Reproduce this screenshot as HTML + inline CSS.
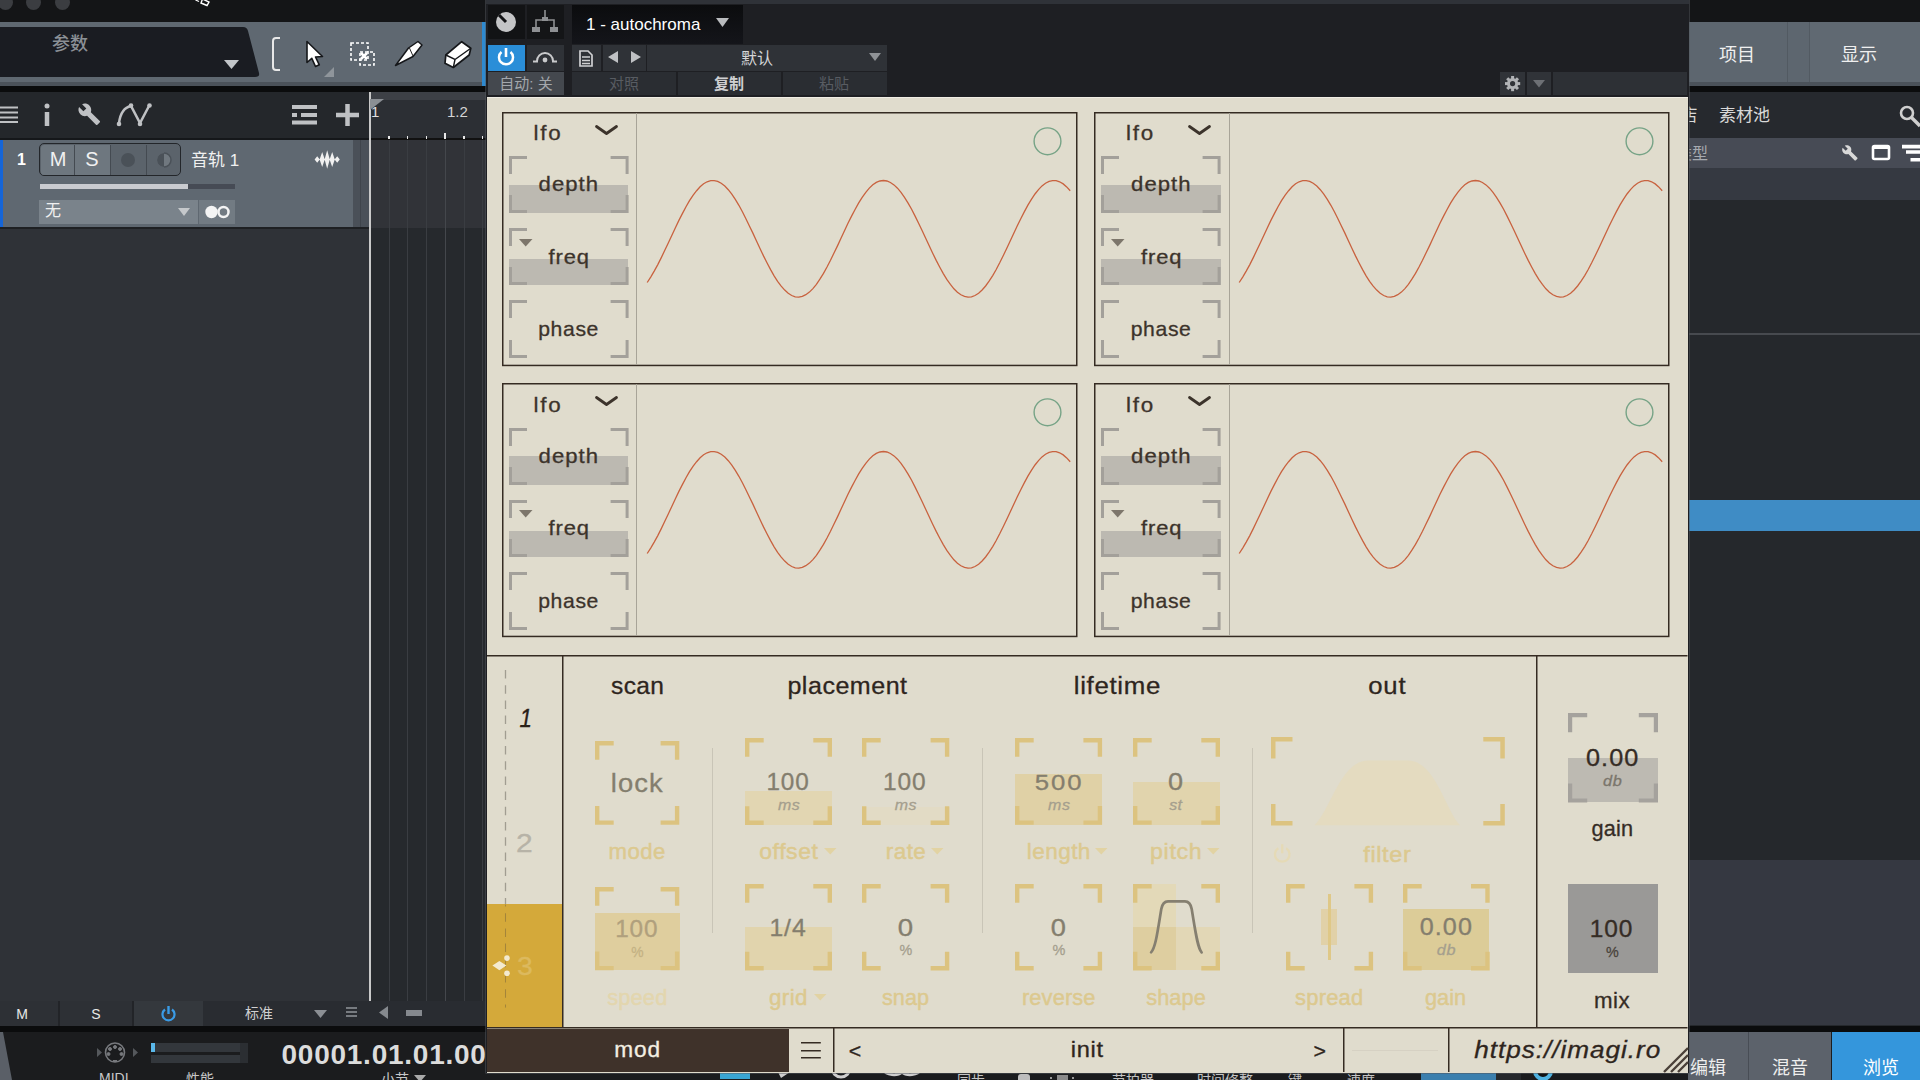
<!DOCTYPE html><html lang="zh"><head><meta charset="utf-8"><title>autochroma</title><style>
*{margin:0;padding:0;box-sizing:border-box}
html,body{width:1920px;height:1080px;overflow:hidden;background:#25282c}
body{position:relative;font-family:"Liberation Sans","Noto Sans CJK SC",sans-serif;color:#ccc}
.a{position:absolute}
.t{position:absolute;white-space:nowrap;line-height:1}
.c{text-align:center}
svg{position:absolute;overflow:visible}
.pl{font-family:"Liberation Sans",sans-serif}
</style></head><body>
<!--DAW-->
<div class="a" style="left:0px;top:0px;width:1920px;height:22px;background:#141517;"></div>
<div class="a" style="left:-2px;top:-5px;width:15px;height:15px;background:#3b3d41;border-radius:50%"></div>
<div class="a" style="left:26px;top:-5px;width:15px;height:15px;background:#3b3d41;border-radius:50%"></div>
<div class="a" style="left:55px;top:-5px;width:15px;height:15px;background:#3b3d41;border-radius:50%"></div>
<svg style="left:194px;top:0" width="18" height="7"><path d="M8.5 -1 L15 2 L13 5.500 L7 3 Z" fill="#141517" stroke="#fff" stroke-width="1.400"/><path d="M1.500 0 L5 1.500" stroke="#fff" stroke-width="1.200"/></svg>
<div class="a" style="left:0px;top:22px;width:487px;height:60px;background:#5f6871;"></div>
<div class="a" style="left:0px;top:82px;width:487px;height:4px;background:#4b525a;"></div>
<div class="a" style="left:0px;top:86px;width:1920px;height:6px;background:#0b0c0d;"></div>
<svg style="left:0;top:0" width="300" height="90"><path d="M0 27 H243 Q247 27 248 31 L259 73 Q260 77 255 77 H0Z" fill="#1a1c22"/></svg>
<div class="t" style="left:52px;top:35px;font-size:18px;color:#8b9096;font-weight:500">参数</div>
<svg style="left:224px;top:60px" width="16" height="10"><path d="M0 0H15L7.5 9Z" fill="#c3c6ca"/></svg>
<svg style="left:0;top:0" width="490" height="90" fill="none" stroke="#fff" stroke-width="2">
<path d="M280 38 H276 Q273 38 273 41 V67 Q273 70 276 70 H280" stroke="#e8e8e8"/>
<path d="M307 41.500 L307 62.500 L311.800 58.300 L315.500 66.500 L319.300 64.800 L315.500 57 L322.500 56.500 Z" fill="#fff" stroke="#15171a" stroke-width="1.600" stroke-linejoin="round"/>
<path d="M324 77 L334 67 V77Z" fill="#8f959b" stroke="none"/>
<rect x="351" y="43" width="17" height="17" stroke-dasharray="3 2" stroke="#fff" stroke-width="1.6"/>
<rect x="360" y="52" width="14" height="13" stroke-dasharray="3 2" stroke="#fff" stroke-width="1.6"/>
<path d="M361 53 L367 59 M367 53 L361 59" stroke="#fff" stroke-width="2.500"/>
<path d="M395.500 65.500 L408.500 48 L418 41.500 L422 45 L413 56.500 Z" fill="#fff" stroke="#15171a" stroke-width="1.500" stroke-linejoin="round"/>
<path d="M409 47 L413 56" stroke="#222" stroke-width="1"/>
<path d="M445.800 55 L461.700 41.700 L470.800 48.300 L469.200 55 L453.300 67.500 L445 63.300 Z" fill="#fff" stroke="#15171a" stroke-width="1.700" stroke-linejoin="round"/>
<path d="M445.800 55 L455 59.500 L470.800 48.300 M455 59.500 L453.300 67.500" stroke="#15171a" stroke-width="1.400"/>
</svg>
<div class="a" style="left:482px;top:22px;width:5px;height:64px;background:#2e8ad0;"></div>
<div class="a" style="left:0px;top:92px;width:369px;height:47px;background:#24272b;"></div>
<div class="a" style="left:0px;top:138px;width:369px;height:2px;background:#15171a;"></div>
<svg style="left:0;top:0" width="370" height="140" fill="none" stroke="#bfc1c4">
<path d="M0 107.500H18 M0 112.500H18 M0 117.500H18 M0 122H18" stroke-width="2.200"/>
<path d="M47 112 V126" stroke-width="4.500"/><circle cx="47" cy="106" r="2.500" fill="#bfc1c4" stroke="none"/>
<path transform="translate(77.5 102.5) scale(0.98)" d="M22.7 19l-9.1-9.1c.9-2.3.4-5-1.5-6.9-2-2-5-2.4-7.4-1.3L9 6 6 9 1.6 4.7C.4 7.1.9 10.1 2.9 12.1c1.9 1.9 4.6 2.4 6.9 1.5l9.1 9.1c.4.4 1 .4 1.4 0l2.3-2.3c.5-.4.5-1.1.1-1.4z" fill="#bfc1c4" stroke="none"/>
<path d="M119 123 Q121 108 131 106 L140 123 L149 106" stroke-width="2.500"/>
<circle cx="119" cy="124" r="2.300" fill="#bfc1c4" stroke="none"/><circle cx="131" cy="105.500" r="2.300" fill="#bfc1c4" stroke="none"/><circle cx="140" cy="124" r="2.300" fill="#bfc1c4" stroke="none"/><circle cx="149.500" cy="105.500" r="2.300" fill="#bfc1c4" stroke="none"/>
<path d="M292 107H317 M301 115H317 M292 122.500H317" stroke-width="4"/><path d="M292 115H297" stroke-width="4"/>
<path d="M336 115H359 M347.500 104V126" stroke-width="4.500"/>
</svg>
<div class="a" style="left:0px;top:140px;width:353px;height:88px;background:#5f6871;"></div>
<div class="a" style="left:0px;top:140px;width:3px;height:88px;background:#1565d8;"></div>
<div class="a" style="left:353px;top:140px;width:16px;height:88px;background:#4a5058;"></div>
<div class="a" style="left:360px;top:140px;width:1px;height:88px;background:#3f444b;"></div>
<div class="a" style="left:0px;top:228px;width:369px;height:773px;background:#2f3237;"></div>
<div class="a" style="left:0px;top:227px;width:369px;height:2px;background:#1e2023;"></div>
<div class="t" style="left:17px;top:152px;font-size:16px;color:#fff;font-weight:bold">1</div>
<div class="a" style="left:39px;top:143px;width:142px;height:33px;background:#5b636b;border-radius:5px;border:1.500px solid #23262a"></div>
<div class="a" style="left:41px;top:145px;width:69px;height:30px;background:#6e777f;border-radius:3px 0 0 3px"></div>
<div class="a" style="left:74px;top:145px;width:1px;height:30px;background:#444a51;"></div>
<div class="a" style="left:110px;top:145px;width:1px;height:30px;background:#444a51;"></div>
<div class="a" style="left:146px;top:145px;width:1px;height:30px;background:#444a51;"></div>
<div class="t c" style="left:38.0px;top:149px;width:40px;font-size:20px;color:#f1f1f1;">M</div>
<div class="t c" style="left:72.0px;top:149px;width:40px;font-size:20px;color:#f1f1f1;">S</div>
<div class="a" style="left:121px;top:153px;width:14px;height:14px;background:#4a5158;border-radius:50%"></div>
<svg style="left:156px;top:152px" width="16" height="16"><circle cx="8" cy="8" r="7" fill="#70787f"/><path d="M8 1 A7 7 0 0 0 8 15Z" fill="#4a5158"/><path d="M8 1 A7 7 0 0 1 8 15" fill="none" stroke="#4a5158" stroke-width="1.500"/></svg>
<div class="t" style="left:191px;top:152px;font-size:17px;color:#f0f0f0;">音轨 1</div>
<svg style="left:314.500px;top:149.700px" width="26" height="20"><path d="M-0.4 9.5L2.2 6.3L4.8 9.5L2.2 12.7ZM4.6 9.5L7.2 2.0L9.8 9.5L7.2 17.0ZM9.6 9.5L12.2 0.1999999999999993L14.8 9.5L12.2 18.8ZM14.6 9.5L17.2 2.0L19.8 9.5L17.2 17.0ZM19.6 9.5L22.2 6.3L24.8 9.5L22.2 12.7Z" fill="#f0f0f0"/></svg>
<div class="a" style="left:40px;top:184px;width:195px;height:5px;background:#464b55;"></div>
<div class="a" style="left:40px;top:184px;width:148px;height:5px;background:#c9cbd0;"></div>
<div class="a" style="left:39px;top:200px;width:159px;height:24px;background:#7a838b;"></div>
<div class="a" style="left:199px;top:200px;width:36px;height:24px;background:#727b83;"></div>
<div class="t" style="left:45px;top:203px;font-size:16px;color:#f0f0f0;">无</div>
<svg style="left:178px;top:208px" width="12" height="8"><path d="M0 0H12L6 8Z" fill="#c5c8cb"/></svg>
<svg style="left:204px;top:204px" width="28" height="16"><circle cx="7.500" cy="8" r="6.200" fill="#f4f4f4"/><circle cx="19.500" cy="8" r="5" fill="none" stroke="#f4f4f4" stroke-width="2.500"/></svg>
<div class="a" style="left:369px;top:92px;width:118px;height:8px;background:#3d4046;"></div>
<div class="a" style="left:369px;top:100px;width:118px;height:40px;background:#2c2f34;"></div>
<div class="a" style="left:369px;top:140px;width:118px;height:88px;background:#313338;"></div>
<div class="a" style="left:369px;top:228px;width:118px;height:773px;background:#26292d;"></div>
<div class="a" style="left:369px;top:138px;width:118px;height:1.5px;background:#111;"></div>
<div class="a" style="left:388.5px;top:140px;width:1px;height:861px;background:#3a3d42;"></div>
<div class="a" style="left:388.25px;top:136px;width:1.5px;height:3px;background:#e8e8e8;"></div>
<div class="a" style="left:407.0px;top:140px;width:1px;height:861px;background:#3a3d42;"></div>
<div class="a" style="left:406.75px;top:136px;width:1.5px;height:3px;background:#e8e8e8;"></div>
<div class="a" style="left:426.0px;top:140px;width:1px;height:861px;background:#3a3d42;"></div>
<div class="a" style="left:425.75px;top:136px;width:1.5px;height:3px;background:#e8e8e8;"></div>
<div class="a" style="left:444.5px;top:140px;width:1px;height:861px;background:#44474c;"></div>
<div class="a" style="left:444.25px;top:133px;width:1.5px;height:6px;background:#e8e8e8;"></div>
<div class="a" style="left:463.5px;top:140px;width:1px;height:861px;background:#3a3d42;"></div>
<div class="a" style="left:463.25px;top:136px;width:1.5px;height:3px;background:#e8e8e8;"></div>
<div class="a" style="left:482.0px;top:140px;width:1px;height:861px;background:#3a3d42;"></div>
<div class="a" style="left:481.75px;top:136px;width:1.5px;height:3px;background:#e8e8e8;"></div>
<div class="a" style="left:369px;top:92px;width:1.5px;height:909px;background:#c9c9c9;"></div>
<svg style="left:370px;top:99px" width="16" height="12"><path d="M0 0H14L0 11Z" fill="#8b8f94"/></svg>
<div class="t" style="left:371px;top:104px;font-size:15px;color:#e0e0e0;">1</div>
<div class="t" style="left:447px;top:104px;font-size:15px;color:#d5d5d5;">1.2</div>
<div class="a" style="left:0px;top:1001px;width:487px;height:25px;background:#292c31;"></div>
<div class="a" style="left:0px;top:1001px;width:58px;height:25px;background:#2d3035;"></div>
<div class="a" style="left:60px;top:1001px;width:72px;height:25px;background:#2d3035;"></div>
<div class="a" style="left:134px;top:1001px;width:69px;height:25px;background:#34383d;"></div>
<div class="a" style="left:58px;top:1001px;width:2px;height:25px;background:#222428;"></div>
<div class="a" style="left:132px;top:1001px;width:2px;height:25px;background:#222428;"></div>
<div class="t c" style="left:7.0px;top:1007px;width:30px;font-size:14px;color:#e8e8e8;">M</div>
<div class="t c" style="left:81.0px;top:1007px;width:30px;font-size:14px;color:#e8e8e8;">S</div>
<svg style="left:160px;top:1005px" width="18" height="18"><path d="M5 4.500 A6 6 0 1 0 12 4.500" fill="none" stroke="#3a9be6" stroke-width="2.200"/><path d="M8.500 1V9" stroke="#3a9be6" stroke-width="2.400"/></svg>
<div class="t" style="left:245px;top:1006px;font-size:14px;color:#d0d0d0;">标准</div>
<svg style="left:314px;top:1010px" width="14" height="8"><path d="M0 0H13L6.500 8Z" fill="#8b8f94"/></svg>
<div class="a" style="left:346px;top:1007px;width:11px;height:2px;background:#777b80;"></div>
<div class="a" style="left:346px;top:1011px;width:11px;height:2px;background:#777b80;"></div>
<div class="a" style="left:346px;top:1015px;width:11px;height:2px;background:#777b80;"></div>
<svg style="left:378px;top:1006px" width="12" height="14"><path d="M10 0V13L1 6.500Z" fill="#85898e"/></svg>
<div class="a" style="left:406px;top:1010px;width:16px;height:6px;background:#85898e;"></div>
<div class="a" style="left:0px;top:1026px;width:1920px;height:6px;background:#0b0c0d;"></div>
<div class="a" style="left:0px;top:1032px;width:1920px;height:48px;background:#1b1c1e;"></div>
<svg style="left:0;top:1032px" width="14" height="48"><path d="M0 0H3L12 48H0Z" fill="#5a5f67"/></svg>
<svg style="left:94px;top:1040px" width="46" height="26" fill="none" stroke="#77797d"><circle cx="21" cy="12.500" r="9.500" stroke-width="1.600"/>
<path d="M3 8 L8 12.500 L3 17Z M39 8L44 12.500L39 17Z" fill="#55585c" stroke="none"/>
<circle cx="21" cy="7" r="1.500" fill="#77797d"/><circle cx="16" cy="9" r="1.500" fill="#77797d"/><circle cx="26" cy="9" r="1.500" fill="#77797d"/><circle cx="14.500" cy="14" r="1.500" fill="#77797d"/><circle cx="27.500" cy="14" r="1.500" fill="#77797d"/><path d="M19 21h4" stroke-width="2"/></svg>
<div class="a" style="left:151px;top:1043px;width:97px;height:9px;background:#33373c;"></div>
<div class="a" style="left:151px;top:1055px;width:97px;height:8px;background:#33373c;"></div>
<div class="a" style="left:151px;top:1043px;width:4px;height:9px;background:#5ab8ea;"></div>
<div class="a" style="left:240px;top:1043px;width:8px;height:20px;background:#2b2e32;"></div>
<div class="t" style="left:99px;top:1071px;font-size:14px;color:#c8c8c8;">MIDI</div>
<div class="t" style="left:186px;top:1072px;font-size:14px;color:#c8c8c8;">性能</div>
<div class="t" style="left:281.5px;top:1040.5px;font-size:28px;color:#dcdcdc;font-weight:bold;letter-spacing:0.75px">00001.01.01.00</div>
<div class="t" style="left:381px;top:1072px;font-size:14px;color:#c8c8c8;">小节</div>
<svg style="left:414px;top:1075px" width="12" height="6"><path d="M0 0H12L6 7Z" fill="#aaa"/></svg>
<div class="a" style="left:720px;top:1073px;width:30px;height:6px;background:#3aa6d4;"></div>
<div class="t" style="left:957px;top:1072.5px;font-size:14px;color:#c4c4c4;">同步</div>
<div class="t" style="left:1112px;top:1072.5px;font-size:14px;color:#c4c4c4;">节拍器</div>
<div class="t" style="left:1197px;top:1072.5px;font-size:14px;color:#c4c4c4;">时间修整</div>
<div class="t" style="left:1288px;top:1072.5px;font-size:14px;color:#c4c4c4;">键</div>
<div class="t" style="left:1347px;top:1072.5px;font-size:14px;color:#c4c4c4;">速度</div>
<div class="a" style="left:1018px;top:1074px;width:12px;height:6px;background:#bdbdbd;border-radius:3px 3px 0 0"></div>
<div class="a" style="left:1057px;top:1075px;width:11px;height:5px;background:#8a8a8a;"></div>
<div class="a" style="left:1050px;top:1077px;width:2px;height:2px;background:#999;"></div>
<div class="a" style="left:1072px;top:1077px;width:2px;height:2px;background:#999;"></div>
<div class="a" style="left:1421px;top:1073px;width:75px;height:7px;background:#3b7fae;"></div>
<div class="a" style="left:1496px;top:1073px;width:25px;height:7px;background:#26292d;"></div>
<svg style="left:0;top:1072px" width="1920" height="8"><path d="M778 0H790L781 6Z" fill="#cfcfcf"/><circle cx="841" cy="-4" r="9" fill="none" stroke="#cfcfcf" stroke-width="3"/><path d="M884 -2 a10 6 0 0 0 18 2 a10 6 0 0 0 18 -2" fill="none" stroke="#cfcfcf" stroke-width="3"/><circle cx="1543" cy="-1" r="8" fill="#111" stroke="#4fb2e0" stroke-width="4"/></svg>
<div class="a" style="left:1688px;top:22px;width:232px;height:60px;background:#5d666f;"></div>
<div class="a" style="left:1688px;top:82px;width:232px;height:4px;background:#4b525a;"></div>
<div class="a" style="left:1787px;top:22px;width:1px;height:60px;background:#525a62;"></div>
<div class="a" style="left:1809px;top:22px;width:1px;height:60px;background:#525a62;"></div>
<div class="a" style="left:1810px;top:22px;width:110px;height:60px;background:#606972;"></div>
<div class="t c" style="left:1697.0px;top:45.5px;width:80px;font-size:18px;color:#f0f0f0;">项目</div>
<div class="t c" style="left:1819.0px;top:45.5px;width:80px;font-size:18px;color:#f0f0f0;">显示</div>
<div class="a" style="left:1688px;top:92px;width:232px;height:46px;background:#26292e;"></div>
<div class="t" style="left:1680.5px;top:107px;font-size:17px;color:#d8d8d8;">店</div>
<div class="t" style="left:1719px;top:107px;font-size:17px;color:#d8d8d8;">素材池</div>
<svg style="left:1896px;top:102px" width="26" height="26"><circle cx="11" cy="11" r="6" fill="none" stroke="#cfcfcf" stroke-width="2.600"/><path d="M15.500 15.500L24 24" stroke="#cfcfcf" stroke-width="3.400"/></svg>
<div class="a" style="left:1688px;top:138px;width:232px;height:30px;background:#474b55;"></div>
<div class="a" style="left:1688px;top:168px;width:232px;height:32px;background:#353941;"></div>
<div class="a" style="left:1688px;top:200px;width:232px;height:660px;background:#25282c;"></div>
<div class="t" style="left:1676px;top:146px;font-size:16px;color:#a6aab0;">类型</div>
<svg style="left:1838px;top:142px" width="84" height="24" fill="none"><path transform="translate(3.5 2.5) scale(0.7)" d="M22.7 19l-9.1-9.1c.9-2.3.4-5-1.5-6.9-2-2-5-2.4-7.4-1.3L9 6 6 9 1.6 4.7C.4 7.1.9 10.1 2.9 12.1c1.9 1.9 4.6 2.4 6.9 1.5l9.1 9.1c.4.4 1 .4 1.4 0l2.3-2.3c.5-.4.5-1.1.1-1.4z" fill="#d8d8d8"/>
<rect x="35" y="4" width="16" height="13" rx="1.500" stroke="#fff" stroke-width="2.600"/><path d="M35 5H51" stroke="#fff" stroke-width="4"/>
<path d="M64 4.600H84 M68 10H84 M72.500 17.800H84" stroke="#fff" stroke-width="3.600"/></svg>
<div class="a" style="left:1688px;top:333px;width:232px;height:1.5px;background:#474a4f;"></div>
<div class="a" style="left:1688px;top:500px;width:232px;height:31px;background:#3f8cc5;"></div>
<div class="a" style="left:1688px;top:860px;width:232px;height:165px;background:#353841;"></div>
<div class="a" style="left:1688px;top:1032px;width:60px;height:48px;background:#5c626b;"></div>
<div class="a" style="left:1749px;top:1032px;width:82px;height:48px;background:#5c626b;"></div>
<div class="a" style="left:1832px;top:1032px;width:88px;height:48px;background:#3496dc;"></div>
<div class="a" style="left:1748px;top:1032px;width:1px;height:48px;background:#484d55;"></div>
<div class="t c" style="left:1678.0px;top:1059px;width:60px;font-size:18px;color:#eee;">编辑</div>
<div class="t c" style="left:1760.0px;top:1059px;width:60px;font-size:18px;color:#eee;">混音</div>
<div class="t c" style="left:1851.0px;top:1059px;width:60px;font-size:18px;color:#fff;">浏览</div>
<!--plugin-->
<div class="a" style="left:486px;top:0px;width:1202.5px;height:1073px;background:#1e1f23;box-shadow:0 0 0 0.500px #55595f"></div>
<div class="a" style="left:486px;top:0px;width:1202.5px;height:4px;background:#2f3238;"></div>
<div class="a" style="left:488px;top:5px;width:37px;height:34px;background:#121315;"></div>
<div class="a" style="left:526.5px;top:5px;width:37px;height:34px;background:#141517;"></div>
<svg style="left:495px;top:11px" width="22" height="22"><circle cx="11" cy="11" r="10" fill="#c4c5c7"/><path d="M11 11L4 4" stroke="#121315" stroke-width="3"/></svg>
<svg style="left:531px;top:8px" width="28" height="28" fill="#8e9093" stroke="#8e9093"><path d="M14 2V12 M5 20V12H23V20" fill="none" stroke-width="1.600"/><rect x="11" y="9" width="6" height="4" stroke="none"/><rect x="1" y="19" width="8" height="5" stroke="none"/><rect x="19" y="19" width="8" height="5" stroke="none"/></svg>
<div class="a" style="left:572px;top:5px;width:171px;height:39px;background:#0f1013;background:linear-gradient(#0b0c0e,#14151a)"></div>
<div class="t" style="left:586px;top:15.5px;font-size:17px;color:#fff;">1 - autochroma</div>
<svg style="left:716px;top:18px" width="14" height="9"><path d="M0 0H13L6.500 9Z" fill="#b9bbbe"/></svg>
<div class="a" style="left:488px;top:45px;width:37px;height:25.5px;background:#2a8ed8;"></div>
<div class="a" style="left:526.5px;top:45px;width:37px;height:25.5px;background:#2f3237;"></div>
<svg style="left:496px;top:47px" width="20" height="21"><path d="M5.500 5 A7 7 0 1 0 14.500 5" fill="none" stroke="#fff" stroke-width="2.500"/><path d="M10 1V10" stroke="#fff" stroke-width="2.600"/></svg>
<svg style="left:533px;top:48px" width="24" height="18"><path d="M4 13 A8 8 0 0 1 20 13" fill="none" stroke="#c9cacc" stroke-width="2"/><path d="M0 13.500H5 M19 13.500H24" stroke="#c9cacc" stroke-width="2"/><circle cx="12" cy="12" r="2.400" fill="#c9cacc"/></svg>
<div class="a" style="left:572px;top:45px;width:29px;height:25.5px;background:#2f3237;"></div>
<div class="a" style="left:603px;top:45px;width:42.5px;height:25.5px;background:#2f3237;"></div>
<div class="a" style="left:647px;top:45px;width:240px;height:25.5px;background:#2f3237;"></div>
<svg style="left:579px;top:50px" width="14" height="17"><path d="M1 1H9L13 5V16H1Z" fill="none" stroke="#d0d1d3" stroke-width="1.700"/><path d="M3 7H11 M3 10.500H11 M3 13.500H11" stroke="#d0d1d3" stroke-width="1.500"/></svg>
<svg style="left:607px;top:51px" width="36" height="13"><path d="M11 0V12L1 6Z M24 0V12L34 6Z" fill="#bfc1c4"/></svg>
<div class="t c" style="left:717.0px;top:50.5px;width:80px;font-size:16px;color:#d4d5d7;">默认</div>
<svg style="left:869px;top:53px" width="13" height="9"><path d="M0 0H12L6 8Z" fill="#8f9296"/></svg>
<div class="a" style="left:488px;top:72px;width:76px;height:23px;background:#44484e;"></div>
<div class="a" style="left:572px;top:72px;width:104px;height:23px;background:#2a2d32;"></div>
<div class="a" style="left:678px;top:72px;width:103px;height:23px;background:#2a2d32;"></div>
<div class="a" style="left:783px;top:72px;width:104px;height:23px;background:#2a2d32;"></div>
<div class="t c" style="left:488.0px;top:76px;width:76px;font-size:15px;color:#a3a7ac;">自动: 关</div>
<div class="t c" style="left:584.0px;top:76px;width:80px;font-size:15px;color:#585c62;">对照</div>
<div class="t c" style="left:689.0px;top:76px;width:80px;font-size:15px;color:#cfd0d2;font-weight:bold">复制</div>
<div class="t c" style="left:794.0px;top:76px;width:80px;font-size:15px;color:#585c62;">粘贴</div>
<div class="a" style="left:1500px;top:72px;width:25px;height:23px;background:#303338;"></div>
<div class="a" style="left:1527px;top:72px;width:24px;height:23px;background:#303338;"></div>
<div class="a" style="left:1553px;top:72px;width:134px;height:23px;background:#2d3035;"></div>
<svg style="left:1504px;top:75px" width="18" height="18"><g transform="translate(8.6 8.6)"><circle r="4.1" fill="none" stroke="#b1b3b6" stroke-width="3"/><rect x="-1.5" y="-7.6" width="3" height="3.4" fill="#b1b3b6" transform="rotate(0)"/><rect x="-1.5" y="-7.6" width="3" height="3.4" fill="#b1b3b6" transform="rotate(45)"/><rect x="-1.5" y="-7.6" width="3" height="3.4" fill="#b1b3b6" transform="rotate(90)"/><rect x="-1.5" y="-7.6" width="3" height="3.4" fill="#b1b3b6" transform="rotate(135)"/><rect x="-1.5" y="-7.6" width="3" height="3.4" fill="#b1b3b6" transform="rotate(180)"/><rect x="-1.5" y="-7.6" width="3" height="3.4" fill="#b1b3b6" transform="rotate(225)"/><rect x="-1.5" y="-7.6" width="3" height="3.4" fill="#b1b3b6" transform="rotate(270)"/><rect x="-1.5" y="-7.6" width="3" height="3.4" fill="#b1b3b6" transform="rotate(315)"/></g></svg>
<svg style="left:1533px;top:80px" width="13" height="8"><path d="M0 0H12L6 7.500Z" fill="#6d7075"/></svg>
<div class="a" style="left:487px;top:97px;width:1200.5px;height:975.5px;background:#e0dccd;"></div>
<div class="a" style="left:487px;top:96.5px;width:1200.5px;height:1px;background:#f0ede4;"></div>
<svg style="left:501.5px;top:111.5px" width="576" height="255"><rect x="0.75" y="0.75" width="574" height="252.7" fill="none" stroke="#352b22" stroke-width="1.5"/></svg>
<div class="a" style="left:636.0px;top:112.5px;width:1px;height:252px;background:#a8a498;"></div>
<svg class="pl" style="left:533px;top:140px" width="1" height="1"><text transform="translate(0.53 0.00) scale(1.120 1)" style="font-size:20px;fill:#3c332b;stroke:#3c332b;stroke-width:0.3px;letter-spacing:1.53px;">lfo</text></svg>
<svg style="left:595.0px;top:124.5px" width="24" height="12"><path d="M1.500 1.500L11.500 8.500L21.500 1.500" fill="none" stroke="#3c332b" stroke-width="2.800" stroke-linecap="round" stroke-linejoin="round"/></svg>
<div class="a" style="left:508.7px;top:184.5px;width:119.6px;height:28.5px;background:#bcb9b1;"></div>
<svg class="bk" style="left:508.7px;top:156.0px" width="119.6" height="57" fill="#a3a09a"><path d="M0 0H18V3H3V18H0Z M119.6 0V18H116.6V3H101.6V0Z M0 57V39H3V54H18V57Z M119.6 57H101.6V54H116.6V39H119.6Z"/></svg>
<svg class="pl" style="left:538px;top:191px" width="1" height="1"><text transform="translate(0.60 0.30) scale(1.105 1)" style="font-size:20px;fill:#3c332b;stroke:#3c332b;stroke-width:0.3px;letter-spacing:0.94px;">depth</text></svg>
<div class="a" style="left:508.7px;top:259.0px;width:119.6px;height:26.0px;background:#bcb9b1;"></div>
<svg class="bk" style="left:508.7px;top:228.2px" width="119.6" height="57" fill="#a3a09a"><path d="M0 0H18V3H3V18H0Z M119.6 0V18H116.6V3H101.6V0Z M0 57V39H3V54H18V57Z M119.6 57H101.6V54H116.6V39H119.6Z"/></svg>
<svg class="pl" style="left:548px;top:263px" width="1" height="1"><text transform="translate(0.53 0.75) scale(1.096 1)" style="font-size:20px;fill:#3c332b;stroke:#3c332b;stroke-width:0.3px;letter-spacing:0.79px;">freq</text></svg>
<svg class="bk" style="left:508.7px;top:300.4px" width="119.6" height="57.9" fill="#a3a09a"><path d="M0 0H18V3H3V18H0Z M119.6 0V18H116.6V3H101.6V0Z M0 57.9V39.9H3V54.9H18V57.9Z M119.6 57.9H101.6V54.9H116.6V39.9H119.6Z"/></svg>
<svg class="pl" style="left:538px;top:336px" width="1" height="1"><text transform="translate(0.18 0.20) scale(1.059 1)" style="font-size:20px;fill:#3c332b;stroke:#3c332b;stroke-width:0.3px;letter-spacing:0.60px;">phase</text></svg>
<svg style="left:518.5px;top:238.5px" width="14" height="8"><path d="M0 0H13.500L6.700 7.500Z" fill="#7d766b"/></svg>
<svg style="left:501.5px;top:111.5px" width="576" height="254"><path d="M145.2,170.5 L148.7,165.1 L152.2,159.1 L155.8,152.6 L159.3,145.6 L162.8,138.3 L166.4,130.8 L169.9,123.2 L173.4,115.7 L176.9,108.4 L180.5,101.4 L184.0,94.8 L187.5,88.7 L191.0,83.3 L194.6,78.7 L198.1,74.8 L201.6,71.8 L205.1,69.8 L208.7,68.7 L212.2,68.6 L215.7,69.4 L219.2,71.3 L222.8,74.0 L226.3,77.7 L229.8,82.2 L233.3,87.4 L236.9,93.3 L240.4,99.8 L243.9,106.7 L247.4,114.0 L251.0,121.4 L254.5,129.0 L258.0,136.5 L261.5,143.9 L265.1,151.0 L268.6,157.6 L272.1,163.8 L275.6,169.3 L279.2,174.1 L282.7,178.1 L286.2,181.3 L289.7,183.5 L293.2,184.8 L296.8,185.1 L300.3,184.4 L303.8,182.7 L307.4,180.1 L310.9,176.6 L314.4,172.3 L317.9,167.2 L321.5,161.4 L325.0,155.0 L328.5,148.2 L332.0,141.0 L335.6,133.6 L339.1,126.0 L342.6,118.4 L346.1,111.0 L349.7,103.9 L353.2,97.2 L356.7,90.9 L360.2,85.3 L363.8,80.3 L367.3,76.1 L370.8,72.8 L374.3,70.4 L377.9,69.0 L381.4,68.5 L384.9,69.0 L388.4,70.5 L392.0,72.9 L395.5,76.2 L399.0,80.4 L402.5,85.4 L406.1,91.1 L409.6,97.3 L413.1,104.1 L416.6,111.3 L420.2,118.7 L423.7,126.2 L427.2,133.8 L430.7,141.2 L434.2,148.4 L437.8,155.2 L441.3,161.6 L444.8,167.4 L448.4,172.4 L451.9,176.8 L455.4,180.2 L458.9,182.8 L462.5,184.4 L466.0,185.1 L469.5,184.8 L473.0,183.5 L476.6,181.2 L480.1,178.0 L483.6,174.0 L487.1,169.2 L490.7,163.6 L494.2,157.5 L497.7,150.8 L501.2,143.7 L504.8,136.3 L508.3,128.8 L511.8,121.2 L515.3,113.8 L518.9,106.5 L522.4,99.6 L525.9,93.1 L529.4,87.3 L533.0,82.0 L536.5,77.6 L540.0,73.9 L543.5,71.2 L547.1,69.4 L550.6,68.6 L554.1,68.7 L557.6,69.8 L561.2,71.9 L564.7,74.9 L568.2,78.8" fill="none" stroke="#c8623f" stroke-width="1.300"/><circle cx="545.500" cy="29.300" r="13.400" fill="none" stroke="#76a386" stroke-width="1.400"/></svg>
<svg style="left:1094px;top:111.5px" width="576" height="255"><rect x="0.75" y="0.75" width="574" height="252.7" fill="none" stroke="#352b22" stroke-width="1.5"/></svg>
<div class="a" style="left:1228.5px;top:112.5px;width:1px;height:252px;background:#a8a498;"></div>
<svg class="pl" style="left:1126px;top:140px" width="1" height="1"><text transform="translate(0.03 0.00) scale(1.120 1)" style="font-size:20px;fill:#3c332b;stroke:#3c332b;stroke-width:0.3px;letter-spacing:1.53px;">lfo</text></svg>
<svg style="left:1187.5px;top:124.5px" width="24" height="12"><path d="M1.500 1.500L11.500 8.500L21.500 1.500" fill="none" stroke="#3c332b" stroke-width="2.800" stroke-linecap="round" stroke-linejoin="round"/></svg>
<div class="a" style="left:1101.2px;top:184.5px;width:119.6px;height:28.5px;background:#bcb9b1;"></div>
<svg class="bk" style="left:1101.2px;top:156.0px" width="119.6" height="57" fill="#a3a09a"><path d="M0 0H18V3H3V18H0Z M119.6 0V18H116.6V3H101.6V0Z M0 57V39H3V54H18V57Z M119.6 57H101.6V54H116.6V39H119.6Z"/></svg>
<svg class="pl" style="left:1131px;top:191px" width="1" height="1"><text transform="translate(0.10 0.30) scale(1.105 1)" style="font-size:20px;fill:#3c332b;stroke:#3c332b;stroke-width:0.3px;letter-spacing:0.94px;">depth</text></svg>
<div class="a" style="left:1101.2px;top:259.0px;width:119.6px;height:26.0px;background:#bcb9b1;"></div>
<svg class="bk" style="left:1101.2px;top:228.2px" width="119.6" height="57" fill="#a3a09a"><path d="M0 0H18V3H3V18H0Z M119.6 0V18H116.6V3H101.6V0Z M0 57V39H3V54H18V57Z M119.6 57H101.6V54H116.6V39H119.6Z"/></svg>
<svg class="pl" style="left:1141px;top:263px" width="1" height="1"><text transform="translate(0.03 0.75) scale(1.096 1)" style="font-size:20px;fill:#3c332b;stroke:#3c332b;stroke-width:0.3px;letter-spacing:0.79px;">freq</text></svg>
<svg class="bk" style="left:1101.2px;top:300.4px" width="119.6" height="57.9" fill="#a3a09a"><path d="M0 0H18V3H3V18H0Z M119.6 0V18H116.6V3H101.6V0Z M0 57.9V39.9H3V54.9H18V57.9Z M119.6 57.9H101.6V54.9H116.6V39.9H119.6Z"/></svg>
<svg class="pl" style="left:1130px;top:336px" width="1" height="1"><text transform="translate(0.68 0.20) scale(1.059 1)" style="font-size:20px;fill:#3c332b;stroke:#3c332b;stroke-width:0.3px;letter-spacing:0.60px;">phase</text></svg>
<svg style="left:1111px;top:238.5px" width="14" height="8"><path d="M0 0H13.500L6.700 7.500Z" fill="#7d766b"/></svg>
<svg style="left:1094px;top:111.5px" width="576" height="254"><path d="M145.2,170.5 L148.7,165.1 L152.2,159.1 L155.8,152.6 L159.3,145.6 L162.8,138.3 L166.4,130.8 L169.9,123.2 L173.4,115.7 L176.9,108.4 L180.5,101.4 L184.0,94.8 L187.5,88.7 L191.0,83.3 L194.6,78.7 L198.1,74.8 L201.6,71.8 L205.1,69.8 L208.7,68.7 L212.2,68.6 L215.7,69.4 L219.2,71.3 L222.8,74.0 L226.3,77.7 L229.8,82.2 L233.3,87.4 L236.9,93.3 L240.4,99.8 L243.9,106.7 L247.4,114.0 L251.0,121.4 L254.5,129.0 L258.0,136.5 L261.5,143.9 L265.1,151.0 L268.6,157.6 L272.1,163.8 L275.6,169.3 L279.2,174.1 L282.7,178.1 L286.2,181.3 L289.7,183.5 L293.2,184.8 L296.8,185.1 L300.3,184.4 L303.8,182.7 L307.4,180.1 L310.9,176.6 L314.4,172.3 L317.9,167.2 L321.5,161.4 L325.0,155.0 L328.5,148.2 L332.0,141.0 L335.6,133.6 L339.1,126.0 L342.6,118.4 L346.1,111.0 L349.7,103.9 L353.2,97.2 L356.7,90.9 L360.2,85.3 L363.8,80.3 L367.3,76.1 L370.8,72.8 L374.3,70.4 L377.9,69.0 L381.4,68.5 L384.9,69.0 L388.4,70.5 L392.0,72.9 L395.5,76.2 L399.0,80.4 L402.5,85.4 L406.1,91.1 L409.6,97.3 L413.1,104.1 L416.6,111.3 L420.2,118.7 L423.7,126.2 L427.2,133.8 L430.7,141.2 L434.2,148.4 L437.8,155.2 L441.3,161.6 L444.8,167.4 L448.4,172.4 L451.9,176.8 L455.4,180.2 L458.9,182.8 L462.5,184.4 L466.0,185.1 L469.5,184.8 L473.0,183.5 L476.6,181.2 L480.1,178.0 L483.6,174.0 L487.1,169.2 L490.7,163.6 L494.2,157.5 L497.7,150.8 L501.2,143.7 L504.8,136.3 L508.3,128.8 L511.8,121.2 L515.3,113.8 L518.9,106.5 L522.4,99.6 L525.9,93.1 L529.4,87.3 L533.0,82.0 L536.5,77.6 L540.0,73.9 L543.5,71.2 L547.1,69.4 L550.6,68.6 L554.1,68.7 L557.6,69.8 L561.2,71.9 L564.7,74.9 L568.2,78.8" fill="none" stroke="#c8623f" stroke-width="1.300"/><circle cx="545.500" cy="29.300" r="13.400" fill="none" stroke="#76a386" stroke-width="1.400"/></svg>
<svg style="left:501.5px;top:383px" width="576" height="255"><rect x="0.75" y="0.75" width="574" height="252.7" fill="none" stroke="#352b22" stroke-width="1.5"/></svg>
<div class="a" style="left:636.0px;top:384px;width:1px;height:252px;background:#a8a498;"></div>
<svg class="pl" style="left:533px;top:411px" width="1" height="1"><text transform="translate(0.53 0.50) scale(1.120 1)" style="font-size:20px;fill:#3c332b;stroke:#3c332b;stroke-width:0.3px;letter-spacing:1.53px;">lfo</text></svg>
<svg style="left:595.0px;top:396px" width="24" height="12"><path d="M1.500 1.500L11.500 8.500L21.500 1.500" fill="none" stroke="#3c332b" stroke-width="2.800" stroke-linecap="round" stroke-linejoin="round"/></svg>
<div class="a" style="left:508.7px;top:456px;width:119.6px;height:28.5px;background:#bcb9b1;"></div>
<svg class="bk" style="left:508.7px;top:427.5px" width="119.6" height="57" fill="#a3a09a"><path d="M0 0H18V3H3V18H0Z M119.6 0V18H116.6V3H101.6V0Z M0 57V39H3V54H18V57Z M119.6 57H101.6V54H116.6V39H119.6Z"/></svg>
<svg class="pl" style="left:538px;top:462px" width="1" height="1"><text transform="translate(0.60 0.80) scale(1.105 1)" style="font-size:20px;fill:#3c332b;stroke:#3c332b;stroke-width:0.3px;letter-spacing:0.94px;">depth</text></svg>
<div class="a" style="left:508.7px;top:530.5px;width:119.6px;height:26.0px;background:#bcb9b1;"></div>
<svg class="bk" style="left:508.7px;top:499.7px" width="119.6" height="57" fill="#a3a09a"><path d="M0 0H18V3H3V18H0Z M119.6 0V18H116.6V3H101.6V0Z M0 57V39H3V54H18V57Z M119.6 57H101.6V54H116.6V39H119.6Z"/></svg>
<svg class="pl" style="left:548px;top:535px" width="1" height="1"><text transform="translate(0.53 0.25) scale(1.096 1)" style="font-size:20px;fill:#3c332b;stroke:#3c332b;stroke-width:0.3px;letter-spacing:0.79px;">freq</text></svg>
<svg class="bk" style="left:508.7px;top:571.9px" width="119.6" height="57.9" fill="#a3a09a"><path d="M0 0H18V3H3V18H0Z M119.6 0V18H116.6V3H101.6V0Z M0 57.9V39.9H3V54.9H18V57.9Z M119.6 57.9H101.6V54.9H116.6V39.9H119.6Z"/></svg>
<svg class="pl" style="left:538px;top:607px" width="1" height="1"><text transform="translate(0.18 0.70) scale(1.059 1)" style="font-size:20px;fill:#3c332b;stroke:#3c332b;stroke-width:0.3px;letter-spacing:0.60px;">phase</text></svg>
<svg style="left:518.5px;top:510px" width="14" height="8"><path d="M0 0H13.500L6.700 7.500Z" fill="#7d766b"/></svg>
<svg style="left:501.5px;top:383px" width="576" height="254"><path d="M145.2,170.5 L148.7,165.1 L152.2,159.1 L155.8,152.6 L159.3,145.6 L162.8,138.3 L166.4,130.8 L169.9,123.2 L173.4,115.7 L176.9,108.4 L180.5,101.4 L184.0,94.8 L187.5,88.7 L191.0,83.3 L194.6,78.7 L198.1,74.8 L201.6,71.8 L205.1,69.8 L208.7,68.7 L212.2,68.6 L215.7,69.4 L219.2,71.3 L222.8,74.0 L226.3,77.7 L229.8,82.2 L233.3,87.4 L236.9,93.3 L240.4,99.8 L243.9,106.7 L247.4,114.0 L251.0,121.4 L254.5,129.0 L258.0,136.5 L261.5,143.9 L265.1,151.0 L268.6,157.6 L272.1,163.8 L275.6,169.3 L279.2,174.1 L282.7,178.1 L286.2,181.3 L289.7,183.5 L293.2,184.8 L296.8,185.1 L300.3,184.4 L303.8,182.7 L307.4,180.1 L310.9,176.6 L314.4,172.3 L317.9,167.2 L321.5,161.4 L325.0,155.0 L328.5,148.2 L332.0,141.0 L335.6,133.6 L339.1,126.0 L342.6,118.4 L346.1,111.0 L349.7,103.9 L353.2,97.2 L356.7,90.9 L360.2,85.3 L363.8,80.3 L367.3,76.1 L370.8,72.8 L374.3,70.4 L377.9,69.0 L381.4,68.5 L384.9,69.0 L388.4,70.5 L392.0,72.9 L395.5,76.2 L399.0,80.4 L402.5,85.4 L406.1,91.1 L409.6,97.3 L413.1,104.1 L416.6,111.3 L420.2,118.7 L423.7,126.2 L427.2,133.8 L430.7,141.2 L434.2,148.4 L437.8,155.2 L441.3,161.6 L444.8,167.4 L448.4,172.4 L451.9,176.8 L455.4,180.2 L458.9,182.8 L462.5,184.4 L466.0,185.1 L469.5,184.8 L473.0,183.5 L476.6,181.2 L480.1,178.0 L483.6,174.0 L487.1,169.2 L490.7,163.6 L494.2,157.5 L497.7,150.8 L501.2,143.7 L504.8,136.3 L508.3,128.8 L511.8,121.2 L515.3,113.8 L518.9,106.5 L522.4,99.6 L525.9,93.1 L529.4,87.3 L533.0,82.0 L536.5,77.6 L540.0,73.9 L543.5,71.2 L547.1,69.4 L550.6,68.6 L554.1,68.7 L557.6,69.8 L561.2,71.9 L564.7,74.9 L568.2,78.8" fill="none" stroke="#c8623f" stroke-width="1.300"/><circle cx="545.500" cy="29.300" r="13.400" fill="none" stroke="#76a386" stroke-width="1.400"/></svg>
<svg style="left:1094px;top:383px" width="576" height="255"><rect x="0.75" y="0.75" width="574" height="252.7" fill="none" stroke="#352b22" stroke-width="1.5"/></svg>
<div class="a" style="left:1228.5px;top:384px;width:1px;height:252px;background:#a8a498;"></div>
<svg class="pl" style="left:1126px;top:411px" width="1" height="1"><text transform="translate(0.03 0.50) scale(1.120 1)" style="font-size:20px;fill:#3c332b;stroke:#3c332b;stroke-width:0.3px;letter-spacing:1.53px;">lfo</text></svg>
<svg style="left:1187.5px;top:396px" width="24" height="12"><path d="M1.500 1.500L11.500 8.500L21.500 1.500" fill="none" stroke="#3c332b" stroke-width="2.800" stroke-linecap="round" stroke-linejoin="round"/></svg>
<div class="a" style="left:1101.2px;top:456px;width:119.6px;height:28.5px;background:#bcb9b1;"></div>
<svg class="bk" style="left:1101.2px;top:427.5px" width="119.6" height="57" fill="#a3a09a"><path d="M0 0H18V3H3V18H0Z M119.6 0V18H116.6V3H101.6V0Z M0 57V39H3V54H18V57Z M119.6 57H101.6V54H116.6V39H119.6Z"/></svg>
<svg class="pl" style="left:1131px;top:462px" width="1" height="1"><text transform="translate(0.10 0.80) scale(1.105 1)" style="font-size:20px;fill:#3c332b;stroke:#3c332b;stroke-width:0.3px;letter-spacing:0.94px;">depth</text></svg>
<div class="a" style="left:1101.2px;top:530.5px;width:119.6px;height:26.0px;background:#bcb9b1;"></div>
<svg class="bk" style="left:1101.2px;top:499.7px" width="119.6" height="57" fill="#a3a09a"><path d="M0 0H18V3H3V18H0Z M119.6 0V18H116.6V3H101.6V0Z M0 57V39H3V54H18V57Z M119.6 57H101.6V54H116.6V39H119.6Z"/></svg>
<svg class="pl" style="left:1141px;top:535px" width="1" height="1"><text transform="translate(0.03 0.25) scale(1.096 1)" style="font-size:20px;fill:#3c332b;stroke:#3c332b;stroke-width:0.3px;letter-spacing:0.79px;">freq</text></svg>
<svg class="bk" style="left:1101.2px;top:571.9px" width="119.6" height="57.9" fill="#a3a09a"><path d="M0 0H18V3H3V18H0Z M119.6 0V18H116.6V3H101.6V0Z M0 57.9V39.9H3V54.9H18V57.9Z M119.6 57.9H101.6V54.9H116.6V39.9H119.6Z"/></svg>
<svg class="pl" style="left:1130px;top:607px" width="1" height="1"><text transform="translate(0.68 0.70) scale(1.059 1)" style="font-size:20px;fill:#3c332b;stroke:#3c332b;stroke-width:0.3px;letter-spacing:0.60px;">phase</text></svg>
<svg style="left:1111px;top:510px" width="14" height="8"><path d="M0 0H13.500L6.700 7.500Z" fill="#7d766b"/></svg>
<svg style="left:1094px;top:383px" width="576" height="254"><path d="M145.2,170.5 L148.7,165.1 L152.2,159.1 L155.8,152.6 L159.3,145.6 L162.8,138.3 L166.4,130.8 L169.9,123.2 L173.4,115.7 L176.9,108.4 L180.5,101.4 L184.0,94.8 L187.5,88.7 L191.0,83.3 L194.6,78.7 L198.1,74.8 L201.6,71.8 L205.1,69.8 L208.7,68.7 L212.2,68.6 L215.7,69.4 L219.2,71.3 L222.8,74.0 L226.3,77.7 L229.8,82.2 L233.3,87.4 L236.9,93.3 L240.4,99.8 L243.9,106.7 L247.4,114.0 L251.0,121.4 L254.5,129.0 L258.0,136.5 L261.5,143.9 L265.1,151.0 L268.6,157.6 L272.1,163.8 L275.6,169.3 L279.2,174.1 L282.7,178.1 L286.2,181.3 L289.7,183.5 L293.2,184.8 L296.8,185.1 L300.3,184.4 L303.8,182.7 L307.4,180.1 L310.9,176.6 L314.4,172.3 L317.9,167.2 L321.5,161.4 L325.0,155.0 L328.5,148.2 L332.0,141.0 L335.6,133.6 L339.1,126.0 L342.6,118.4 L346.1,111.0 L349.7,103.9 L353.2,97.2 L356.7,90.9 L360.2,85.3 L363.8,80.3 L367.3,76.1 L370.8,72.8 L374.3,70.4 L377.9,69.0 L381.4,68.5 L384.9,69.0 L388.4,70.5 L392.0,72.9 L395.5,76.2 L399.0,80.4 L402.5,85.4 L406.1,91.1 L409.6,97.3 L413.1,104.1 L416.6,111.3 L420.2,118.7 L423.7,126.2 L427.2,133.8 L430.7,141.2 L434.2,148.4 L437.8,155.2 L441.3,161.6 L444.8,167.4 L448.4,172.4 L451.9,176.8 L455.4,180.2 L458.9,182.8 L462.5,184.4 L466.0,185.1 L469.5,184.8 L473.0,183.5 L476.6,181.2 L480.1,178.0 L483.6,174.0 L487.1,169.2 L490.7,163.6 L494.2,157.5 L497.7,150.8 L501.2,143.7 L504.8,136.3 L508.3,128.8 L511.8,121.2 L515.3,113.8 L518.9,106.5 L522.4,99.6 L525.9,93.1 L529.4,87.3 L533.0,82.0 L536.5,77.6 L540.0,73.9 L543.5,71.2 L547.1,69.4 L550.6,68.6 L554.1,68.7 L557.6,69.8 L561.2,71.9 L564.7,74.9 L568.2,78.8" fill="none" stroke="#c8623f" stroke-width="1.300"/><circle cx="545.500" cy="29.300" r="13.400" fill="none" stroke="#76a386" stroke-width="1.400"/></svg>
<svg style="left:487px;top:655.3px" width="1200.5" height="1.5"><rect width="1200.5" height="1.5" fill="#352b22"/></svg>
<svg style="left:562.2px;top:656px" width="1.5" height="372"><rect width="1.5" height="372" fill="#352b22"/></svg>
<svg style="left:1536.4px;top:656px" width="1.5" height="372"><rect width="1.5" height="372" fill="#352b22"/></svg>
<svg style="left:504px;top:670px" width="3" height="338"><path d="M1.5 0V234.6" stroke="#a19d91" stroke-width="1.3" stroke-dasharray="8.5 6.7"/></svg>
<svg class="pl" style="left:519px;top:726px" width="1" height="1"><text transform="translate(0.44 0.70) scale(0.900 1)" style="font-size:25px;fill:#2a2018;stroke:#2a2018;stroke-width:0.3px;letter-spacing:0.00px;font-style:italic;">1</text></svg>
<svg class="pl" style="left:516px;top:851px" width="1" height="1"><text transform="translate(0.00 0.50) scale(1.200 1)" style="font-size:25px;fill:#b7b3a7;stroke:#b7b3a7;stroke-width:0.3px;letter-spacing:0.00px;">2</text></svg>
<div class="a" style="left:487px;top:904px;width:75.2px;height:124px;background:#d4a93a;"></div>
<svg style="left:504px;top:670px" width="3" height="338"><path d="M1.5 0V337.7" stroke="#a4853a" stroke-width="1.3" stroke-dasharray="8.5 6.7" clip-path="inset(234.6px 0 0 0)"/></svg>
<svg class="pl" style="left:516px;top:975px" width="1" height="1"><text transform="translate(0.93 0.00) scale(1.137 1)" style="font-size:25px;fill:#dcb95e;stroke:#dcb95e;stroke-width:0.3px;letter-spacing:0.00px;">3</text></svg>
<svg style="left:491px;top:953px" width="22" height="24" fill="#f3ead0"><path d="M1.4 12.6L8.4 8L15.4 12.6L8.4 17.2Z"/><circle cx="16" cy="5.1" r="2.8"/><circle cx="16" cy="20.3" r="2.8"/></svg>
<svg class="pl" style="left:611px;top:693px" width="1" height="1"><text transform="translate(0.06 0.50) scale(1.024 1)" style="font-size:24px;fill:#2e251d;stroke:#2e251d;stroke-width:0.3px;letter-spacing:0.31px;">scan</text></svg>
<svg class="pl" style="left:787px;top:693px" width="1" height="1"><text transform="translate(0.43 0.50) scale(1.045 1)" style="font-size:24px;fill:#2e251d;stroke:#2e251d;stroke-width:0.3px;letter-spacing:0.48px;">placement</text></svg>
<svg class="pl" style="left:1073px;top:693px" width="1" height="1"><text transform="translate(0.72 0.50) scale(1.078 1)" style="font-size:24px;fill:#2e251d;stroke:#2e251d;stroke-width:0.3px;letter-spacing:0.62px;">lifetime</text></svg>
<svg class="pl" style="left:1368px;top:693px" width="1" height="1"><text transform="translate(0.13 0.50) scale(1.072 1)" style="font-size:24px;fill:#2e251d;stroke:#2e251d;stroke-width:0.3px;letter-spacing:0.88px;">out</text></svg>
<div class="a" style="left:711.5px;top:748px;width:1px;height:185px;background:#c9c5b7;"></div>
<div class="a" style="left:981.7px;top:748px;width:1px;height:185px;background:#c9c5b7;"></div>
<div class="a" style="left:1251.8px;top:748px;width:1px;height:185px;background:#c9c5b7;"></div>
<svg class="bk" style="left:595.3px;top:741.2px" width="84.3" height="83.8" fill="#dcc380"><path d="M0 0H18.7V4.4H4.4V18.7H0Z M84.3 0V18.7H79.89999999999999V4.4H65.6V0Z M0 83.8V65.1H4.4V79.39999999999999H18.7V83.8Z M84.3 83.8H65.6V79.39999999999999H79.89999999999999V65.1H84.3Z"/></svg>
<svg class="pl" style="left:610px;top:791px" width="1" height="1"><text transform="translate(0.72 0.70) scale(1.095 1)" style="font-size:25px;fill:#847e6e;stroke:#847e6e;stroke-width:0.3px;letter-spacing:1.02px;">lock</text></svg>
<svg class="pl" style="left:608px;top:859px" width="1" height="1"><text transform="translate(0.58 0.20) scale(1.032 1)" style="font-size:21.5px;fill:#dcc98f;stroke:#dcc98f;stroke-width:0.45px;letter-spacing:0.44px;">mode</text></svg>
<div class="a" style="left:745.3px;top:790.8px;width:87px;height:34.200000000000045px;background:#e2d6b2;"></div>
<svg class="bk" style="left:745.3px;top:738px" width="87" height="87" fill="#dcc380"><path d="M0 0H18.7V4.4H4.4V18.7H0Z M87 0V18.7H82.6V4.4H68.3V0Z M0 87V68.3H4.4V82.6H18.7V87Z M87 87H68.3V82.6H82.6V68.3H87Z"/></svg>
<svg class="pl" style="left:766px;top:790px" width="1" height="1"><text transform="translate(0.45 0.00) scale(1.058 1)" style="font-size:23px;fill:#847e6e;stroke:#847e6e;stroke-width:0.3px;letter-spacing:0.80px;">100</text></svg>
<svg class="pl" style="left:778px;top:810px" width="1" height="1"><text transform="translate(0.04 0.00) scale(1.029 1)" style="font-size:15.5px;fill:#a59f8e;stroke:#a59f8e;stroke-width:0.3px;letter-spacing:0.47px;font-style:italic;">ms</text></svg>
<svg class="pl" style="left:759px;top:859px" width="1" height="1"><text transform="translate(0.27 0.20) scale(1.068 1)" style="font-size:21.5px;fill:#dcc98f;stroke:#dcc98f;stroke-width:0.45px;letter-spacing:0.54px;">offset</text></svg>
<svg style="left:824px;top:848.4px" width="12.5" height="6.5"><path d="M0 0H12.5L6.25 6.5Z" fill="#e2d3a3"/></svg>
<div class="a" style="left:862.3px;top:806.5px;width:87.3px;height:18.5px;background:#e2dbc5;"></div>
<svg class="bk" style="left:862.3px;top:738px" width="87.3" height="87" fill="#dcc380"><path d="M0 0H18.7V4.4H4.4V18.7H0Z M87.3 0V18.7H82.89999999999999V4.4H68.6V0Z M0 87V68.3H4.4V82.6H18.7V87Z M87.3 87H68.6V82.6H82.89999999999999V68.3H87.3Z"/></svg>
<svg class="pl" style="left:882px;top:790px" width="1" height="1"><text transform="translate(0.94 0.00) scale(1.065 1)" style="font-size:23px;fill:#847e6e;stroke:#847e6e;stroke-width:0.3px;letter-spacing:0.90px;">100</text></svg>
<svg class="pl" style="left:894px;top:810px" width="1" height="1"><text transform="translate(0.74 0.00) scale(1.032 1)" style="font-size:15.5px;fill:#a59f8e;stroke:#a59f8e;stroke-width:0.3px;letter-spacing:0.51px;font-style:italic;">ms</text></svg>
<svg class="pl" style="left:885px;top:859px" width="1" height="1"><text transform="translate(0.87 0.20) scale(1.044 1)" style="font-size:21.5px;fill:#dcc98f;stroke:#dcc98f;stroke-width:0.45px;letter-spacing:0.40px;">rate</text></svg>
<svg style="left:930.5px;top:848.4px" width="12.5" height="6.5"><path d="M0 0H12.5L6.25 6.5Z" fill="#e2d3a3"/></svg>
<div class="a" style="left:1015.4px;top:774.2px;width:87.1px;height:50.59999999999991px;background:#e0d1a6;"></div>
<svg class="bk" style="left:1015.4px;top:738px" width="87.1" height="86.8" fill="#dcc380"><path d="M0 0H18.7V4.4H4.4V18.7H0Z M87.1 0V18.7H82.69999999999999V4.4H68.39999999999999V0Z M0 86.8V68.1H4.4V82.39999999999999H18.7V86.8Z M87.1 86.8H68.39999999999999V82.39999999999999H82.69999999999999V68.1H87.1Z"/></svg>
<svg class="pl" style="left:1034px;top:790px" width="1" height="1"><text transform="translate(0.82 0.20) scale(1.120 1)" style="font-size:23px;fill:#847e6e;stroke:#847e6e;stroke-width:0.3px;letter-spacing:1.69px;">500</text></svg>
<svg class="pl" style="left:1048px;top:810px" width="1" height="1"><text transform="translate(0.04 0.00) scale(1.032 1)" style="font-size:15.5px;fill:#a59f8e;stroke:#a59f8e;stroke-width:0.3px;letter-spacing:0.51px;font-style:italic;">ms</text></svg>
<svg class="pl" style="left:1026px;top:859px" width="1" height="1"><text transform="translate(0.79 0.20) scale(1.049 1)" style="font-size:21.5px;fill:#dcc98f;stroke:#dcc98f;stroke-width:0.45px;letter-spacing:0.42px;">length</text></svg>
<svg style="left:1095.3px;top:848.4px" width="12.5" height="6.5"><path d="M0 0H12.5L6.25 6.5Z" fill="#e2d3a3"/></svg>
<div class="a" style="left:1132.7px;top:781.9px;width:87px;height:42.89999999999998px;background:#e1d4ad;"></div>
<svg class="bk" style="left:1132.7px;top:738px" width="87" height="86.8" fill="#dcc380"><path d="M0 0H18.7V4.4H4.4V18.7H0Z M87 0V18.7H82.6V4.4H68.3V0Z M0 86.8V68.1H4.4V82.39999999999999H18.7V86.8Z M87 86.8H68.3V82.39999999999999H82.6V68.1H87Z"/></svg>
<svg class="pl" style="left:1167px;top:790px" width="1" height="1"><text transform="translate(0.97 0.20) scale(1.175 1)" style="font-size:23px;fill:#847e6e;stroke:#847e6e;stroke-width:0.3px;letter-spacing:0.00px;">0</text></svg>
<svg class="pl" style="left:1169px;top:810px" width="1" height="1"><text transform="translate(0.20 0.00) scale(1.029 1)" style="font-size:15.5px;fill:#a59f8e;stroke:#a59f8e;stroke-width:0.3px;letter-spacing:0.30px;font-style:italic;">st</text></svg>
<svg class="pl" style="left:1150px;top:859px" width="1" height="1"><text transform="translate(0.02 0.20) scale(1.078 1)" style="font-size:21.5px;fill:#dcc98f;stroke:#dcc98f;stroke-width:0.45px;letter-spacing:0.63px;">pitch</text></svg>
<svg style="left:1206.5px;top:848.4px" width="12.5" height="6.5"><path d="M0 0H12.5L6.25 6.5Z" fill="#e2d3a3"/></svg>
<svg style="left:1270.5px;top:736.5px" width="234" height="89"><path d="M43.5 88.3 C60 72 70 23.5 97 23.5 H137 C164 23.5 174 72 189 88.3Z" fill="#e4dbc0"/></svg>
<svg class="bk" style="left:1270.5px;top:736.5px" width="233.8" height="88.5" fill="#dcc380"><path d="M0 0H21.5V4.5H4.5V21.5H0Z M233.8 0V21.5H229.3V4.5H212.3V0Z M0 88.5V67.0H4.5V84.0H21.5V88.5Z M233.8 88.5H212.3V84.0H229.3V67.0H233.8Z"/></svg>
<svg class="pl" style="left:1363px;top:861px" width="1" height="1"><text transform="translate(0.23 0.70) scale(1.095 1)" style="font-size:21.5px;fill:#dcc98f;stroke:#dcc98f;stroke-width:0.45px;letter-spacing:0.57px;">filter</text></svg>
<svg style="left:1272px;top:843px" width="21" height="21"><path d="M6.300 5.200 A7.300 7.300 0 1 0 14.100 5.200" fill="none" stroke="#e5dab6" stroke-width="2.300"/><path d="M10.200 1.200V10.300" stroke="#e5dab6" stroke-width="2.300"/></svg>
<div class="a" style="left:595.3px;top:912.9px;width:84.3px;height:57.10000000000002px;background:#dfce9e;"></div>
<svg class="bk" style="left:595.3px;top:886.7px" width="84.3" height="83.3" fill="#dcc380"><path d="M0 0H18.7V4.4H4.4V18.7H0Z M84.3 0V18.7H79.89999999999999V4.4H65.6V0Z M0 83.3V64.6H4.4V78.89999999999999H18.7V83.3Z M84.3 83.3H65.6V78.89999999999999H79.89999999999999V64.6H84.3Z"/></svg>
<svg class="pl" style="left:615px;top:936px" width="1" height="1"><text transform="translate(0.15 0.70) scale(1.058 1)" style="font-size:23px;fill:#b0a07d;stroke:#b0a07d;stroke-width:0.3px;letter-spacing:0.80px;">100</text></svg>
<svg class="pl" style="left:631px;top:957px" width="1" height="1"><text transform="translate(0.22 0.00) scale(0.955 1)" style="font-size:14.5px;fill:#c4b284;stroke:#c4b284;stroke-width:0.3px;letter-spacing:0.00px;">%</text></svg>
<svg class="pl" style="left:607px;top:1004px" width="1" height="1"><text transform="translate(0.13 0.60) scale(1.016 1)" style="font-size:21.5px;fill:#e3d6ae;stroke:#e3d6ae;stroke-width:0.45px;letter-spacing:0.18px;">speed</text></svg>
<div class="a" style="left:745.3px;top:927.3px;width:87px;height:42.700000000000045px;background:#e1d4ad;"></div>
<svg class="bk" style="left:745.3px;top:883.5px" width="87" height="86.5" fill="#dcc380"><path d="M0 0H18.7V4.4H4.4V18.7H0Z M87 0V18.7H82.6V4.4H68.3V0Z M0 86.5V67.8H4.4V82.1H18.7V86.5Z M87 86.5H68.3V82.1H82.6V67.8H87Z"/></svg>
<svg class="pl" style="left:769px;top:935px" width="1" height="1"><text transform="translate(0.42 0.80) scale(1.077 1)" style="font-size:23px;fill:#847e6e;stroke:#847e6e;stroke-width:0.3px;letter-spacing:0.86px;">1/4</text></svg>
<svg class="pl" style="left:769px;top:1004px" width="1" height="1"><text transform="translate(0.09 0.60) scale(1.039 1)" style="font-size:21.5px;fill:#dcc98f;stroke:#dcc98f;stroke-width:0.45px;letter-spacing:0.34px;">grid</text></svg>
<svg style="left:813.6px;top:994px" width="12.5" height="6.5"><path d="M0 0H12.5L6.25 6.5Z" fill="#e2d3a3"/></svg>
<svg class="bk" style="left:862.3px;top:883.5px" width="87.3" height="86.5" fill="#dcc380"><path d="M0 0H18.7V4.4H4.4V18.7H0Z M87.3 0V18.7H82.89999999999999V4.4H68.6V0Z M0 86.5V67.8H4.4V82.1H18.7V86.5Z M87.3 86.5H68.6V82.1H82.89999999999999V67.8H87.3Z"/></svg>
<svg class="pl" style="left:897px;top:935px" width="1" height="1"><text transform="translate(0.75 0.50) scale(1.200 1)" style="font-size:23px;fill:#847e6e;stroke:#847e6e;stroke-width:0.3px;letter-spacing:0.00px;">0</text></svg>
<svg class="pl" style="left:899px;top:955px" width="1" height="1"><text transform="translate(0.51 0.40) scale(0.988 1)" style="font-size:14.5px;fill:#a59f8e;stroke:#a59f8e;stroke-width:0.3px;letter-spacing:0.00px;">%</text></svg>
<svg class="pl" style="left:881px;top:1004px" width="1" height="1"><text transform="translate(0.93 0.60) scale(1.007 1)" style="font-size:21.5px;fill:#dcc98f;stroke:#dcc98f;stroke-width:0.45px;letter-spacing:0.09px;">snap</text></svg>
<svg class="bk" style="left:1015.4px;top:883.5px" width="87.1" height="86.5" fill="#dcc380"><path d="M0 0H18.7V4.4H4.4V18.7H0Z M87.1 0V18.7H82.69999999999999V4.4H68.39999999999999V0Z M0 86.5V67.8H4.4V82.1H18.7V86.5Z M87.1 86.5H68.39999999999999V82.1H82.69999999999999V67.8H87.1Z"/></svg>
<svg class="pl" style="left:1050px;top:935px" width="1" height="1"><text transform="translate(0.86 0.50) scale(1.184 1)" style="font-size:23px;fill:#847e6e;stroke:#847e6e;stroke-width:0.3px;letter-spacing:0.00px;">0</text></svg>
<svg class="pl" style="left:1052px;top:955px" width="1" height="1"><text transform="translate(0.40 0.40) scale(0.997 1)" style="font-size:14.5px;fill:#a59f8e;stroke:#a59f8e;stroke-width:0.3px;letter-spacing:0.00px;">%</text></svg>
<svg class="pl" style="left:1021px;top:1004px" width="1" height="1"><text transform="translate(0.90 0.60) scale(1.015 1)" style="font-size:21.5px;fill:#dcc98f;stroke:#dcc98f;stroke-width:0.45px;letter-spacing:0.14px;">reverse</text></svg>
<div class="a" style="left:1132.7px;top:883.5px;width:43.5px;height:43.8px;background:#e3d9b8;"></div>
<div class="a" style="left:1132.7px;top:927.3px;width:43.5px;height:42.7px;background:#decea0;"></div>
<div class="a" style="left:1176.2px;top:927.3px;width:43.5px;height:42.7px;background:#e2d7b6;"></div>
<svg class="bk" style="left:1132.7px;top:883.5px" width="87" height="86.5" fill="#dcc380"><path d="M0 0H18.7V4.4H4.4V18.7H0Z M87 0V18.7H82.6V4.4H68.3V0Z M0 86.5V67.8H4.4V82.1H18.7V86.5Z M87 86.5H68.3V82.1H82.6V67.8H87Z"/></svg>
<svg style="left:1132.7px;top:883.5px" width="87" height="87"><path d="M18.1 68.4 C22.5 64 24.5 48 28.3 25 Q29.7 17.3 35 17.3 H52 Q57.3 17.3 58.7 25 C62.5 48 64.500 64 68.600 68.4" fill="none" stroke="#857f70" stroke-width="2.7" stroke-linecap="round"/></svg>
<svg class="pl" style="left:1146px;top:1004px" width="1" height="1"><text transform="translate(0.13 0.60) scale(1.011 1)" style="font-size:21.5px;fill:#dcc98f;stroke:#dcc98f;stroke-width:0.45px;letter-spacing:0.13px;">shape</text></svg>
<div class="a" style="left:1321px;top:909.3px;width:16px;height:35.3px;background:#e1d1a8;"></div>
<div class="a" style="left:1327.5px;top:894px;width:3px;height:66px;background:#dfc887;"></div>
<svg class="bk" style="left:1285.6px;top:883.5px" width="87.1" height="86.5" fill="#dcc380"><path d="M0 0H18.7V4.4H4.4V18.7H0Z M87.1 0V18.7H82.69999999999999V4.4H68.39999999999999V0Z M0 86.5V67.8H4.4V82.1H18.7V86.5Z M87.1 86.5H68.39999999999999V82.1H82.69999999999999V67.8H87.1Z"/></svg>
<svg class="pl" style="left:1295px;top:1004px" width="1" height="1"><text transform="translate(0.03 0.60) scale(1.021 1)" style="font-size:21.5px;fill:#dcc98f;stroke:#dcc98f;stroke-width:0.45px;letter-spacing:0.21px;">spread</text></svg>
<div class="a" style="left:1402.7px;top:909.2px;width:86.7px;height:60.799999999999955px;background:#dccc98;"></div>
<svg class="bk" style="left:1402.7px;top:883.5px" width="86.7" height="86.5" fill="#dcc380"><path d="M0 0H18.7V4.4H4.4V18.7H0Z M86.7 0V18.7H82.3V4.4H68.0V0Z M0 86.5V67.8H4.4V82.1H18.7V86.5Z M86.7 86.5H68.0V82.1H82.3V67.8H86.7Z"/></svg>
<svg class="pl" style="left:1419px;top:935px" width="1" height="1"><text transform="translate(0.64 0.20) scale(1.094 1)" style="font-size:23px;fill:#847e6e;stroke:#847e6e;stroke-width:0.3px;letter-spacing:1.01px;">0.00</text></svg>
<svg class="pl" style="left:1436px;top:955px" width="1" height="1"><text transform="translate(0.78 0.40) scale(1.047 1)" style="font-size:15.5px;fill:#a59f8e;stroke:#a59f8e;stroke-width:0.3px;letter-spacing:0.60px;font-style:italic;">db</text></svg>
<svg class="pl" style="left:1424px;top:1004px" width="1" height="1"><text transform="translate(0.92 0.60) scale(1.009 1)" style="font-size:21.5px;fill:#dcc98f;stroke:#dcc98f;stroke-width:0.45px;letter-spacing:0.09px;">gain</text></svg>
<div class="a" style="left:1567.6px;top:757.5px;width:90px;height:44.8px;background:#bdbab2;"></div>
<svg class="bk" style="left:1567.6px;top:712.7px" width="90" height="89.6" fill="#a5a29d"><path d="M0 0H19.2V4.2H4.2V19.2H0Z M90 0V19.2H85.8V4.2H70.8V0Z M0 89.6V70.39999999999999H4.2V85.39999999999999H19.2V89.6Z M90 89.6H70.8V85.39999999999999H85.8V70.39999999999999H90Z"/></svg>
<svg class="pl" style="left:1585px;top:765px" width="1" height="1"><text transform="translate(0.94 0.80) scale(1.096 1)" style="font-size:23px;fill:#352c25;stroke:#352c25;stroke-width:0.3px;letter-spacing:1.03px;">0.00</text></svg>
<svg class="pl" style="left:1602px;top:785px" width="1" height="1"><text transform="translate(0.97 0.60) scale(1.050 1)" style="font-size:15.5px;fill:#7a756b;stroke:#7a756b;stroke-width:0.3px;letter-spacing:0.64px;font-style:italic;">db</text></svg>
<svg class="pl" style="left:1591px;top:836px" width="1" height="1"><text transform="translate(0.61 0.00) scale(1.012 1)" style="font-size:21.5px;fill:#352c25;stroke:#352c25;stroke-width:0.3px;letter-spacing:0.12px;">gain</text></svg>
<div class="a" style="left:1567.5px;top:883.5px;width:90px;height:89.6px;background:#9a9997;"></div>
<svg class="pl" style="left:1589px;top:936px" width="1" height="1"><text transform="translate(0.64 0.70) scale(1.065 1)" style="font-size:23px;fill:#352c25;stroke:#352c25;stroke-width:0.3px;letter-spacing:0.90px;">100</text></svg>
<svg class="pl" style="left:1606px;top:957px" width="1" height="1"><text transform="translate(0.01 0.00) scale(0.988 1)" style="font-size:14.5px;fill:#4a443c;stroke:#4a443c;stroke-width:0.3px;letter-spacing:0.00px;">%</text></svg>
<svg class="pl" style="left:1593px;top:1007px" width="1" height="1"><text transform="translate(0.97 0.50) scale(1.037 1)" style="font-size:21.5px;fill:#352c25;stroke:#352c25;stroke-width:0.3px;letter-spacing:0.46px;">mix</text></svg>
<svg style="left:487px;top:1027.3px" width="1200.5" height="1.5"><rect width="1200.5" height="1.5" fill="#352b22"/></svg>
<div class="a" style="left:487px;top:1028.8px;width:302px;height:43.3px;background:#3f322a;"></div>
<svg class="pl" style="left:614px;top:1056px" width="1" height="1"><text transform="translate(0.35 0.70) scale(1.054 1)" style="font-size:21.5px;fill:#f3eee2;stroke:#f3eee2;stroke-width:0.3px;letter-spacing:0.83px;">mod</text></svg>
<svg style="left:832.6px;top:1028px" width="1.5" height="44"><rect width="1.5" height="44" fill="#352b22"/></svg>
<svg style="left:1342.6px;top:1028px" width="1.5" height="44"><rect width="1.5" height="44" fill="#352b22"/></svg>
<svg style="left:1447.6px;top:1028px" width="1.5" height="44"><rect width="1.5" height="44" fill="#352b22"/></svg>
<svg style="left:800.8px;top:1042.4px" width="19.8" height="1.5"><rect width="19.8" height="1.5" fill="#352b22"/></svg>
<svg style="left:800.8px;top:1050px" width="19.8" height="1.5"><rect width="19.8" height="1.5" fill="#352b22"/></svg>
<svg style="left:800.8px;top:1057.4px" width="19.8" height="1.5"><rect width="19.8" height="1.5" fill="#352b22"/></svg>
<svg class="pl" style="left:848px;top:1057px" width="1" height="1"><text transform="translate(0.79 0.50) scale(1.015 1)" style="font-size:21px;fill:#2e251d;stroke:#2e251d;stroke-width:0.3px;letter-spacing:0.00px;">&lt;</text></svg>
<svg class="pl" style="left:1313px;top:1057px" width="1" height="1"><text transform="translate(0.39 0.50) scale(1.015 1)" style="font-size:21px;fill:#2e251d;stroke:#2e251d;stroke-width:0.3px;letter-spacing:0.00px;">&gt;</text></svg>
<svg class="pl" style="left:1070px;top:1056px" width="1" height="1"><text transform="translate(0.72 0.70) scale(1.099 1)" style="font-size:21.5px;fill:#2e251d;stroke:#2e251d;stroke-width:0.3px;letter-spacing:0.64px;">init</text></svg>
<div class="a" style="left:1352px;top:1050px;width:86px;height:1px;background:#d6d1c3;"></div>
<svg class="pl" style="left:1474px;top:1058px" width="1" height="1"><text transform="translate(0.18 0.10) scale(1.115 1)" style="font-size:23.5px;fill:#2e251d;stroke:#2e251d;stroke-width:0.3px;letter-spacing:0.86px;font-style:italic;">https://imagi.ro</text></svg>
<svg style="left:1662px;top:1046px" width="26" height="26"><path d="M2 26L26 2 M9 26L26 9 M16 26L26 16" stroke="#4a4038" stroke-width="2.4"/></svg>
</body></html>
